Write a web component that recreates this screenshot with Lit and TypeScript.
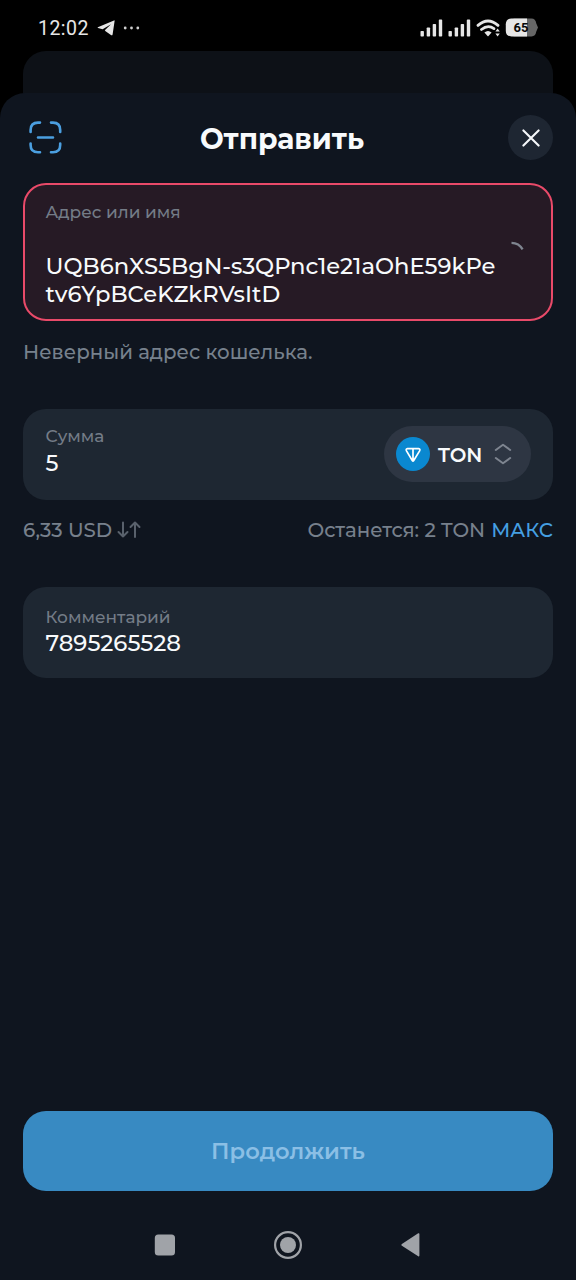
import { LitElement, html, css } from "lit";
import { customElement, property } from "lit/decorators.js";

@customElement("status-bar")
class StatusBar extends LitElement {
  static styles = css`
    :host { display: flex; justify-content: space-between; align-items: center; height: 51px; padding: 5px 36px 0 38px; box-sizing: border-box; color: #e6e6e6; }
    .left, .right { display: flex; align-items: center; }
    .right { margin-top: -1px; }
    .time { font: 400 19.5px/24px Roboto, sans-serif; letter-spacing: 0.45px; padding-top: 2px; }
    .plane { margin-left: 8px; }
    .dots { margin-left: 8px; margin-top: -1px; }
    svg { display: block; }
    text { font: 700 13px Roboto, sans-serif; }
  `;
  render() {
    const bars = html`<svg width="23" height="18" fill="#e6e6e6" viewBox="0 0 23 18">
      <rect x="0.5" y="12" width="3.4" height="5.6" rx="0.8" />
      <rect x="6.7" y="8.5" width="3.4" height="9.1" rx="0.8" />
      <rect x="12.7" y="5" width="3.4" height="12.6" rx="0.8" />
      <rect x="18.8" y="0.6" width="3.4" height="17" rx="0.8" />
    </svg>`;
    return html`
      <div class="left">
        <span class="time">12:02</span>
        <svg class="plane" width="18" height="16" viewBox="0 0 18 16">
          <path d="M0.8 7.2 17 0.4Q17.7 0.2 17.6 1L15.6 14.4Q15.2 15.8 13.9 15L8.6 11.300 7.800 10.300 14 4.200 5.600 9.300 1 7.900Q0.200 7.600 0.800 7.200Z" fill="#e6e6e6" />
        </svg>
        <svg class="dots" width="18" height="4" viewBox="0 0 18 4" fill="#d0d0d0">
          <circle cx="2.2" cy="2" r="1.4" /><circle cx="8.5" cy="2" r="1.4" /><circle cx="14.800" cy="2" r="1.400" />
        </svg>
      </div>
      <div class="right">
        ${bars}
        <svg width="5" height="1"></svg>
        ${bars}
        <svg width="33" height="20" viewBox="0 0 33 20">
          <g transform="translate(5 1)">
            <path d="M2 6.400Q12 -2.400 22 6.400" fill="none" stroke="#e6e6e6" stroke-width="2.800" stroke-linecap="round" />
            <path d="M5.400 10.500Q12 5.200 18 9.600" fill="none" stroke="#e6e6e6" stroke-width="2.700" stroke-linecap="round" />
            <path d="M8.400 13.400Q12 10.400 15.600 13.400L12.500 17Q12 17.500 11.500 17Z" fill="#e6e6e6" />
            <path d="M19.400 12.600 21.600 9.600 23.800 12.600ZM19.400 14.400H23.800L21.600 17.600Z" fill="#e6e6e6" />
          </g>
        </svg>
        <svg width="36" height="19" viewBox="0 0 36 19">
          <path d="M9.500 0.600H27.500Q31.500 0.600 32.300 5.500L34 9.500 32.300 13.500Q31.500 18.400 27.500 18.400H9.500Z" fill="#666" />
          <path d="M7.500 0.600H23V18.400H7.500Q1.800 18.400 1.800 12.700V6.300Q1.800 0.600 7.500 0.600Z" fill="#e6e6e6" />
          <text x="9.600" y="14.200" fill="#080808">65</text>
        </svg>
      </div>
    `;
  }
}

@customElement("field-card")
class FieldCard extends LitElement {
  @property() label = "";
  @property({ type: Boolean, reflect: true }) invalid = false;
  static styles = css`
    :host { display: flex; justify-content: space-between; box-sizing: border-box; height: 91px; padding: 15.5px 22.5px 0; border-radius: 23px; background: #1e2732; }
    :host([invalid]) { height: 138px; padding: 16px 20.5px 0; border: 2px solid #e94a69; background: #261a25; }
    .label { font-size: 16.940px; line-height: 22px; font-weight: 500; color: #747c87; }
  `;
  render() {
    return html`
      <div><div class="label">${this.label}</div><slot></slot></div>
      <slot name="end"></slot>
    `;
  }
}

@customElement("nav-bar")
class NavBar extends LitElement {
  static styles = css`
    :host { display: flex; justify-content: space-between; align-items: center; padding: 0 154px; height: 30px; }
    svg { display: block; }
  `;
  render() {
    return html`
      <svg width="22" height="24" viewBox="0 0 22 24"><rect x="0.800" y="1.500" width="20.200" height="21" rx="3.500" fill="#a0a3a8" /></svg>
      <svg width="30" height="30" viewBox="0 0 30 30">
        <circle cx="15" cy="15" r="12.900" fill="none" stroke="#a0a3a8" stroke-width="2.200" />
        <circle cx="15" cy="15" r="8" fill="#a0a3a8" />
      </svg>
      <svg width="22" height="26" viewBox="0 0 22 26"><path d="M1.900 12 18.200 1.300Q19.400 0.800 19.400 2V23.600Q19.400 24.800 18.200 24.200L1.900 13.800Q0.500 12.900 1.900 12Z" fill="#a0a3a8" /></svg>
    `;
  }
}

@customElement("app-root")
class AppRoot extends LitElement {
  static styles = css`
    :host { display: flex; flex-direction: column; height: 1280px; background: #000; color: #f8fafc; font-family: Montserrat, Inter, sans-serif; font-weight: 500; overflow: hidden; }
    svg { display: block; flex: none; }
    .behind { height: 62px; margin: 0 23px -20px; border-radius: 23px 23px 0 0; background: #0d1117; flex: none; }
    .sheet { flex: 1; display: flex; flex-direction: column; box-sizing: border-box; padding: 21.500px 23px 20px; border-radius: 25px 25px 0 0; background: #0f151f; position: relative; }
    header { display: grid; grid-template-columns: 45px 1fr 45px; align-items: center; height: 46px; margin-bottom: 22.500px; }
    h1 { margin: 0; text-align: center; font-size: 28.200px; line-height: 34px; font-weight: 700; padding-top: 3px; padding-right: 12px; }
    .close { width: 45px; height: 45px; border-radius: 50%; background: #1e2632; display: grid; place-items: center; }
    .address { margin-top: 30.300px; font-size: 22.680px; line-height: 27.200px; white-space: nowrap; }
    .spinner { margin: 39px 6px 0 0; }
    .error { margin: 18px 0 44px; font-size: 19.770px; line-height: 26px; color: #77818d; }
    .amount { font-size: 22.600px; line-height: 30px; margin-top: 1.500px; }
    .token { display: flex; align-items: center; box-sizing: border-box; width: 147px; height: 56px; margin-top: 1.500px; padding-left: 12px; border-radius: 28px; background: #2e3643; font-size: 19.770px; font-weight: 600; }
    .token span { margin: 0 11.500px 0 8.500px; padding-top: 1px; }
    .row { display: flex; justify-content: space-between; align-items: center; height: 26px; margin: 16.500px 0 44.500px; font-size: 19.800px; color: #77808c; white-space: nowrap; }
    .rate, .rest { display: flex; align-items: center; }
    .rate svg { margin-left: 5px; }
    .max { color: #459fe2; margin-left: 6px; }
    .memo { padding-top: 18.500px; }
    .comment { font-size: 22.750px; line-height: 30px; }
    .next { margin-top: auto; margin-bottom: 39.500px; height: 79.500px; flex: none; border: 0; border-radius: 23px; background: #388ac2; color: #8bbfe5; font: 600 22.600px Montserrat, Inter, sans-serif; padding: 1px 0 0; }
    nav-bar { margin: 0 -23px; }
  `;
  render() {
    return html`
      <status-bar></status-bar>
      <div class="behind"></div>
      <main class="sheet">
        <header>
          <svg width="45" height="45" viewBox="0 0 45 45" fill="none" stroke="#4b9fe0" stroke-width="2.600" stroke-linecap="round">
            <path d="M7.600 17V15Q7.600 7.600 15 7.600H17M28 7.600H30Q37.200 7.600 37.200 15V17M37.200 28.500V30Q37.200 37.200 30 37.200H28M17 37.200H15Q7.600 37.200 7.600 30V28.500M15 22.500H30" />
          </svg>
          <h1>Отправить</h1>
          <div class="close">
            <svg width="18" height="18" viewBox="0 0 18 18" stroke="#f5f7fa" stroke-width="2.100" stroke-linecap="round"><path d="M1.400 1.400 16.600 16.600M16.600 1.400 1.400 16.600" /></svg>
          </div>
        </header>

        <field-card label="Адрес или имя" invalid>
          <div class="address">
            <div>UQB6nXS5BgN-s3QPnc1e21aOhE59kPe</div>
            <div>tv6YpBCeKZkRVsItD</div>
          </div>
          <svg slot="end" class="spinner" width="16" height="14" viewBox="0 0 16 14"><path d="M2.500 2.800Q10 2.800 13.600 9.400" fill="none" stroke="#7f8590" stroke-width="2.200" /></svg>
        </field-card>
        <div class="error">Неверный адрес кошелька.</div>

        <field-card label="Сумма">
          <div class="amount">5</div>
          <div slot="end" class="token">
            <svg width="34" height="34" viewBox="0 0 34 34">
              <circle cx="17" cy="17" r="17" fill="#0a88d0" />
              <path d="M11.500 11.600H22.600Q24.600 11.900 23.600 13.900L17.600 23.800Q17 24.500 16.400 23.800L10.500 13.900Q9.500 11.900 11.500 11.600ZM17 11.600V23.500" fill="none" stroke="#fff" stroke-width="1.700" />
            </svg>
            <span>TON</span>
            <svg width="18" height="22" viewBox="0 0 18 22" fill="none" stroke="#7e8590" stroke-width="2" stroke-linecap="round" stroke-linejoin="round"><path d="M1.800 7 9 1.800 16.200 7M1.800 15 9 20.200 16.200 15" /></svg>
          </div>
        </field-card>
        <div class="row">
          <div class="rate">6,33 USD
            <svg width="24" height="18" viewBox="0 0 24 18" fill="none" stroke="#59616c" stroke-width="2" stroke-linecap="round" stroke-linejoin="round"><path d="M6 1.500V15.500M1.500 11 6 15.500 10.500 11M18 16V1.500M13.500 6 18 1.500 22.500 6" /></svg>
          </div>
          <div class="rest">Останется: 2 TON<span class="max">МАКС</span></div>
        </div>

        <field-card class="memo" label="Комментарий">
          <div class="comment">7895265528</div>
        </field-card>

        <button class="next">Продолжить</button>
        <nav-bar></nav-bar>
      </main>
    `;
  }
}
